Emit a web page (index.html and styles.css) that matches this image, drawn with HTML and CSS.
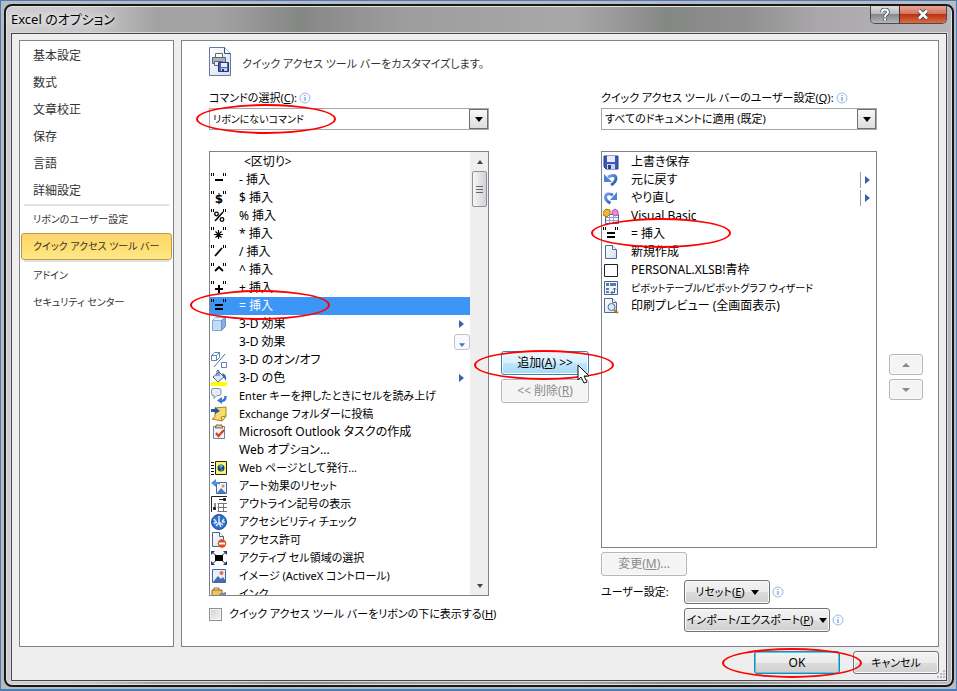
FILE: index.html
```html
<!DOCTYPE html>
<html lang="ja">

<head>
    <meta charset="UTF-8">
    <title>Excel のオプション</title>
    <link rel="stylesheet" href="styles.css">
</head>

<body>

    <svg class="defs" width="0" height="0" aria-hidden="true">
        <defs>
            <linearGradient id="paper" x1="0" y1="0" x2="1" y2="1">
                <stop offset="0" stop-color="#fff" />
                <stop offset="1" stop-color="#d3dff0" />
            </linearGradient>
            <linearGradient id="blue" x1="0" y1="0" x2="1" y2="1">
                <stop offset="0" stop-color="#79a5ea" />
                <stop offset="1" stop-color="#2451a8" />
            </linearGradient>
        </defs>
        <symbol id="quotes" viewBox="0 0 16 16">
            <path d="M.5 1v3M2.500 1v3M12.500 1v3M14.500 1v3" stroke="#000" />
        </symbol>
        <symbol id="equals" viewBox="0 0 16 16">
            <path d="M.5 1v3M2.500 1v3M12.500 1v3M14.500 1v3" stroke="#000" />
            <path d="M4 7h8M4 11h8" stroke="#000" stroke-width="2" />
        </symbol>
        <symbol id="info" viewBox="0 0 12 12">
            <circle cx="6" cy="6" r="5" fill="#f7faff" stroke="#9dbbe6" />
            <path d="M6 3v1M6 5v4" stroke="#5b86c5" />
        </symbol>
        <symbol id="more" viewBox="0 0 5 8">
            <path d="M0 0l5 4-5 4z" fill="#3d62ad" />
        </symbol>
        <symbol id="drop" viewBox="0 0 8 5">
            <path d="M0 0h8L4 5z" fill="currentColor" />
        </symbol>
    </svg>

    <div class="dialog">

        <header class="titlebar">
            <h1 class="title">Excel のオプション</h1>
            <div class="window-buttons">
                <button class="win-help" type="button" aria-label="ヘルプ">
                    <svg width="10" height="13" viewBox="0 0 10 13"><path d="M2 4q0-2.500 3-2.500t3 2.500q0 1.500-1.500 2.300T5 9M5 10.500v2" fill="none" stroke="#444b55" stroke-width="3.600" /><path d="M2 4q0-2.500 3-2.500t3 2.500q0 1.500-1.500 2.300T5 9M5 10.500v2" fill="none" stroke="#fff" stroke-width="2" /></svg>
                </button>
                <button class="win-close" type="button" aria-label="閉じる">
                    <svg width="12" height="11" viewBox="0 0 12 11"><path d="M2 1.500l8 8M10 1.500l-8 8" stroke="#4b4452" stroke-width="4.400" /><path d="M2 1.500l8 8M10 1.500l-8 8" stroke="#fff" stroke-width="2.600" /></svg>
                </button>
            </div>
        </header>

        <div class="client">

            <div class="panes">

                <nav class="sidebar">
                    <a href="#">基本設定</a>
                    <a href="#">数式</a>
                    <a href="#">文章校正</a>
                    <a href="#">保存</a>
                    <a href="#">言語</a>
                    <a href="#">詳細設定</a>
                    <hr>
                    <a href="#" class="dense">リボンのユーザー設定</a>
                    <a href="#" class="dense current">クイック アクセス ツール バー</a>
                    <hr>
                    <a href="#" class="dense">アドイン</a>
                    <a href="#" class="dense">セキュリティ センター</a>
                </nav>

                <main class="page">

                    <div class="heading">
                        <svg width="24" height="30" viewBox="0 0 24 30">
                            <path d="M.5.500h15l6 6v22H.5z" fill="url(#paper)" stroke="#63799f" />
                            <path d="M15.500.500v6h6" fill="#fff" stroke="#304e83" />
                            <path d="M6.500 6.500h7v5h-7z" fill="#fff" stroke="#667" />
                            <path d="M3.500 10.500h13v6h-13z" fill="#aab1ba" stroke="#59616e" />
                            <path d="M5.500 14.500h8v4h-8z" fill="#eef" stroke="#667" />
                            <path d="M9.500 15.500h10v9h-10z" fill="#4a5fc0" stroke="#26377d" />
                            <path d="M12 16h6v4h-6z" fill="#e4ecfa" />
                            <path d="M12 21h6v3h-6z" fill="#c5cdeb" />
                            <path d="M13 22h2v2h-2z" fill="#26377d" />
                        </svg>
                        <h2 class="kana">クイック アクセス ツール バーをカスタマイズします。</h2>
                    </div>

                    <div class="columns">

                        <section class="column">
                            <div class="label-row">
                                <label class="kana" for="commands">コマンドの選択(<u>C</u>):</label>
                                <svg width="12" height="12"><use href="#info" /></svg>
                            </div>
                            <div class="combo">
                                <select id="commands" class="dense">
                                    <option>リボンにないコマンド</option>
                                </select>
                                <span class="combo-arrow"><svg width="8" height="5"><use href="#drop" /></svg></span>
                                <span class="mark mark-combo"></span>
                            </div>
                            <div class="list-box">
                                <ul class="list" role="listbox" aria-label="コマンド">
                                    <li role="option" class="separator"><span>&lt;区切り&gt;</span></li>
                                    <li role="option">
                                        <svg class="icon" viewBox="0 0 16 16"><use href="#quotes" /><path d="M4 8h8" stroke="#000" stroke-width="2" /></svg>
                                        <span>- 挿入</span>
                                    </li>
                                    <li role="option">
                                        <svg class="icon" viewBox="0 0 16 16"><use href="#quotes" /><text x="8" y="13" class="glyph">$</text></svg>
                                        <span>$ 挿入</span>
                                    </li>
                                    <li role="option">
                                        <svg class="icon" viewBox="0 0 16 16"><use href="#quotes" /><path d="M12 4l-8 9" stroke="#000" stroke-width="1.500" /><circle cx="5.500" cy="6" r="1.800" fill="none" stroke="#000" stroke-width="1.300" /><circle cx="11" cy="11.500" r="1.800" fill="none" stroke="#000" stroke-width="1.300" /></svg>
                                        <span>% 挿入</span>
                                    </li>
                                    <li role="option">
                                        <svg class="icon" viewBox="0 0 16 16"><use href="#quotes" /><path d="M7.500 4v9M3 8.500h9M4.500 5.500l6 6M10.500 5.500l-6 6" stroke="#000" stroke-width="1.200" /></svg>
                                        <span>* 挿入</span>
                                    </li>
                                    <li role="option">
                                        <svg class="icon" viewBox="0 0 16 16"><use href="#quotes" /><path d="M11 4l-7 8" stroke="#000" stroke-width="1.800" /></svg>
                                        <span>/ 挿入</span>
                                    </li>
                                    <li role="option">
                                        <svg class="icon" viewBox="0 0 16 16"><use href="#quotes" /><path d="M4 9l4-4 4 4" fill="none" stroke="#000" stroke-width="1.800" /></svg>
                                        <span>^ 挿入</span>
                                    </li>
                                    <li role="option">
                                        <svg class="icon" viewBox="0 0 16 16"><use href="#quotes" /><path d="M4 9h8M8 5v8" stroke="#000" stroke-width="2" /></svg>
                                        <span>+ 挿入</span>
                                    </li>
                                    <li role="option" class="selected" aria-selected="true">
                                        <svg class="icon"><use href="#equals" /></svg>
                                        <span>= 挿入</span>
                                    </li>
                                    <li role="option">
                                        <svg class="icon" viewBox="0 0 16 16"><path d="M1.500 4.500h9v10h-9z" fill="#c3dcf5" stroke="#7fa8d5" /><path d="M1.500 4.500l3-3h10l-4 3z" fill="#eef6ff" stroke="#8fb4dc" /><path d="M10.500 4.500l4-3v9l-4 4z" fill="#86b0e0" stroke="#6d93bd" /></svg>
                                        <span>3-D 効果</span>
                                        <svg class="more" width="5" height="8"><use href="#more" /></svg>
                                    </li>
                                    <li role="option">
                                        <span class="icon"></span>
                                        <span>3-D 効果</span>
                                        <span class="gallery"><svg width="6" height="4" viewBox="0 0 8 5"><path d="M0 0h8L4 5z" fill="#4671c6" /></svg></span>
                                    </li>
                                    <li role="option">
                                        <svg class="icon" viewBox="0 0 16 16" fill="none" stroke="#6284b4"><path d="M.5 3.500h5v5h-5zM.5 3.500l3-3h5l-3 3M8.500.5v5l-3 3M10.500 10.500h5v5h-5z" /><path d="M14 2L3 15" stroke="#547599" /></svg>
                                        <span>3-D のオン/オフ</span>
                                    </li>
                                    <li role="option">
                                        <svg class="icon" viewBox="0 0 16 16"><path d="M0 12h16v4H0z" fill="#ff0" /><path d="M2 7l6-5 5 5-6 5z" fill="#dce8f7" stroke="#4c6791" /><path d="M6 6V1q1-2 2 0v5" fill="none" stroke="#4c6791" /><path d="M11 3q5 1 4 8l-3-5z" fill="#3467b0" /></svg>
                                        <span>3-D の色</span>
                                        <svg class="more" width="5" height="8"><use href="#more" /></svg>
                                    </li>
                                    <li role="option">
                                        <svg class="icon" viewBox="0 0 16 16"><path d="M2 .5h6q2 0 2 2v3q0 2-2 2H6l-3 3v-3H2q-1.500 0-1.500-2v-3q0-2 1.500-2z" fill="#e6ecf6" stroke="#7c8da8" /><path d="M14.500 8q0 5-4 5" fill="none" stroke="#3d78ce" stroke-width="2.500" /><path d="M11 9v7l-5-3.500z" fill="#3d78ce" /></svg>
                                        <span class="kana">Enter キーを押したときにセルを読み上げ</span>
                                    </li>
                                    <li role="option">
                                        <svg class="icon" viewBox="0 0 16 16"><path d="M4 2l11-1v9l-4 5-10-2 3-2z" fill="#f8dd6c" stroke="#aa831d" /><path d="M15 10l-5 1 1 4z" fill="#fff2a7" stroke="#aa831d" /><path d="M0 3h4V1l5 4-5 3V6H0z" fill="#28579f" /></svg>
                                        <span class="kana">Exchange フォルダーに投稿</span>
                                    </li>
                                    <li role="option">
                                        <svg class="icon" viewBox="0 0 16 16"><path d="M2.500 2.500h11v12h-11z" fill="#f2f5fc" stroke="#7081a2" /><path d="M5 3V1h6v2l1 1H4z" fill="#e1c893" stroke="#866d44" /><path d="M5 9l2.500 3L13 6" fill="none" stroke="#dc3d20" stroke-width="2.200" /></svg>
                                        <span>Microsoft Outlook タスクの作成</span>
                                    </li>
                                    <li role="option">
                                        <span class="icon"></span>
                                        <span>Web オプション...</span>
                                    </li>
                                    <li role="option">
                                        <svg class="icon" viewBox="0 0 16 16"><path d="M0 2.500h3M0 5.500h3M0 8.500h3M0 11.500h3M0 14.500h3" stroke="#000" /><path d="M4.500 1.500h11v13h-11z" fill="#fff56a" stroke="#222" /><circle cx="10" cy="8" r="3.500" fill="#153f85" /><path d="M8 6q3-3 4 0l-2 3zM9 10l3-1-1 2z" fill="#50b7ac" /></svg>
                                        <span class="kana">Web ページとして発行...</span>
                                    </li>
                                    <li role="option">
                                        <svg class="icon" viewBox="0 0 16 16"><path d="M5.500 4.500h10v11h-10z" fill="#f0f5ff" stroke="#4267a4" /><path d="M6 15l4-5 5 5z" fill="#4e79bd" /><circle cx="12" cy="8" r="1.500" fill="#e88955" /><path d="M9 7V4H5V1L0 5l5 4V6h3z" fill="#4b91dd" /></svg>
                                        <span class="kana">アート効果のリセット</span>
                                    </li>
                                    <li role="option">
                                        <svg class="icon" viewBox="0 0 16 16" fill="none" stroke="#222"><path d="M.5 16V.5H16" /><path d="M4 11V7M8 3.500h5" /><path d="M2.500 11.500h2v2h-2zM12.500 2.500h2v2h-2z" fill="#222" /><path d="M6.500 7.500H16M6.500 11.500H16M6.500 15.500H16M7.500 7v9M12.500 7v9" stroke="#777" /></svg>
                                        <span class="kana">アウトライン記号の表示</span>
                                    </li>
                                    <li role="option">
                                        <svg class="icon" viewBox="0 0 16 16"><circle cx="8" cy="8" r="7.500" fill="#2e71c7" stroke="#1d4d98" /><path d="M8 2v6l4 3M3 5l3 4M13 5l-2 3M2.500 9h3M11 8h3M5 12l3-3 2 4" fill="none" stroke="#d7e8fb" stroke-width="1.500" /></svg>
                                        <span class="kana">アクセシビリティ チェック</span>
                                    </li>
                                    <li role="option">
                                        <svg class="icon" viewBox="0 0 16 16"><path d="M1.500.5h7l4 4v10h-11z" fill="url(#paper)" stroke="#516685" /><path d="M8.500.5v4h4" fill="#fff" stroke="#516685" /><circle cx="11" cy="11.500" r="4.200" fill="#db4c24" /><path d="M8 11.500h6" stroke="#fff" stroke-width="2" /></svg>
                                        <span class="kana">アクセス許可</span>
                                    </li>
                                    <li role="option">
                                        <svg class="icon" viewBox="0 0 16 16"><path d="M1 2l14 12M15 2L1 14" stroke="#26386e" /><path d="M0 1h4L0 5zM16 1h-4l4 4zM0 15h4l-4-4zM16 15h-4l4-4z" fill="#26386e" /><path d="M4 5h8v6H4z" fill="#000" /></svg>
                                        <span class="kana">アクティブ セル領域の選択</span>
                                    </li>
                                    <li role="option">
                                        <svg class="icon" viewBox="0 0 16 16"><path d="M1.500 1.500h13v13h-13z" fill="#e6efff" stroke="#4267a4" /><path d="M2 14l5-6 3 3 2-2 2 3v2z" fill="#486ca9" /><circle cx="10.500" cy="5" r="2" fill="#e86f3f" /></svg>
                                        <span class="kana">イメージ (ActiveX コントロール)</span>
                                    </li>
                                    <li role="option">
                                        <svg class="icon" viewBox="0 0 16 16"><path d="M1 4h10v9H1z" fill="#f2c45c" stroke="#92681e" /><path d="M3 4V2h5v2" fill="none" stroke="#92681e" /><path d="M8 8l7-2v3l-6 3z" fill="#7388ae" /></svg>
                                        <span class="kana">インク</span>
                                    </li>
                                </ul>
                                <div class="scrollbar" aria-hidden="true">
                                    <svg width="6" height="4" viewBox="0 0 6 4"><path d="M0 4h6L3 0z" fill="#444" /></svg>
                                    <span class="thumb"></span>
                                    <svg width="6" height="4" viewBox="0 0 6 4"><path d="M0 0h6L3 4z" fill="#444" /></svg>
                                </div>
                                <span class="mark mark-left-row"></span>
                            </div>
                            <label class="check kana"><input type="checkbox"><span>クイック アクセス ツール バーをリボンの下に表示する(<u>H</u>)</span></label>
                        </section>

                        <div class="side-buttons">
                            <div class="add">
                                <button class="btn hot" type="button"><span>追加(<u>A</u>) &gt;&gt;</span></button>
                                <span class="mark mark-button"></span>
                                <svg class="cursor" width="13" height="20" viewBox="0 0 13 20"><path d="M1 1v15l3-3 3 6 3-1-3-6h5z" fill="#fff" stroke="#111" /></svg>
                            </div>
                            <button class="btn" type="button" disabled><span>&lt;&lt; 削除(<u>R</u>)</span></button>
                        </div>

                        <section class="column">
                            <div class="label-row">
                                <label class="kana" for="target">クイック アクセス ツール バーのユーザー設定(<u>Q</u>):</label>
                                <svg width="12" height="12"><use href="#info" /></svg>
                            </div>
                            <div class="combo">
                                <select id="target" class="kana">
                                    <option>すべてのドキュメントに適用 (既定)</option>
                                </select>
                                <span class="combo-arrow"><svg width="8" height="5"><use href="#drop" /></svg></span>
                            </div>
                            <div class="list-box">
                                <ul class="list" role="listbox" aria-label="クイック アクセス ツール バー">
                                    <li role="option">
                                        <svg class="icon" viewBox="0 0 16 16"><path d="M1 2h14v13H3l-2-2z" fill="#3c58b6" stroke="#263e8d" /><path d="M4 2h8v6H4z" fill="#e6eefb" /><path d="M4 10h8v5H4z" fill="#ccd5ef" /><path d="M5 11h3v4H5z" fill="#263e8d" /></svg>
                                        <span>上書き保存</span>
                                    </li>
                                    <li role="option">
                                        <svg class="icon" viewBox="0 0 16 16"><path d="M5 5q7-3.500 8 1 0 4-5 7" fill="none" stroke="url(#blue)" stroke-width="3" /><path d="M1 2v8h8z" fill="#4e83da" /></svg>
                                        <span>元に戻す</span>
                                        <span class="split"><svg width="5" height="8"><use href="#more" /></svg></span>
                                    </li>
                                    <li role="option">
                                        <svg class="icon" viewBox="0 0 16 16"><path d="M10 5Q3 2 2.500 7q0 4 5 6" fill="none" stroke="url(#blue)" stroke-width="3" /><path d="M14 2v8H7z" fill="#4e83da" /></svg>
                                        <span>やり直し</span>
                                        <span class="split"><svg width="5" height="8"><use href="#more" /></svg></span>
                                    </li>
                                    <li role="option">
                                        <svg class="icon" viewBox="0 0 16 16"><path d="M2.500 6.500h13v9h-13z" fill="#f4f7ff" stroke="#4965a3" /><path d="M3 9.500h12M3 12.500h12M6.500 7v8M10.500 7v8" stroke="#91a5d0" /><path d="M0 4l3-3 4 1v4L4 9 0 7z" fill="#edb736" stroke="#a77a1b" /><path d="M9 3l3-2 3 2v4l-3 1-3-2z" fill="#e887dd" stroke="#b254a8" /></svg>
                                        <span>Visual Basic</span>
                                    </li>
                                    <li role="option">
                                        <svg class="icon"><use href="#equals" /></svg>
                                        <span>= 挿入</span>
                                    </li>
                                    <li role="option">
                                        <svg class="icon" viewBox="0 0 16 16"><path d="M2.500 1.500h7l4 4v9h-11z" fill="url(#paper)" stroke="#516994" /><path d="M9.500 1.500v4h4" fill="#fff" stroke="#516994" /></svg>
                                        <span>新規作成</span>
                                    </li>
                                    <li role="option">
                                        <svg class="icon" viewBox="0 0 16 16"><path d="M1.500 2.500h13v12h-13z" fill="#fff" stroke="#222" /></svg>
                                        <span>PERSONAL.XLSB!青枠</span>
                                    </li>
                                    <li role="option">
                                        <svg class="icon" viewBox="0 0 16 16"><path d="M1.500 1.500h13v13h-13z" fill="#f4f7fc" stroke="#48658f" /><path d="M3 3h3v3H3zM7 3h6v3H7zM3 8h3v2H3zM3 11h3v2H3z" fill="#587aad" /><path d="M8 12.500h3.500V8M10 9.500L11.500 8 13 9.500M9.500 11L8 12.500 9.500 14" fill="none" stroke="#36588f" /></svg>
                                        <span class="dense">ピボットテーブル/ピボットグラフ ウィザード</span>
                                    </li>
                                    <li role="option">
                                        <svg class="icon" viewBox="0 0 16 16"><path d="M1.500.5h8l4 4v10h-12z" fill="url(#paper)" stroke="#516994" /><path d="M9.500.5v4h4" fill="#fff" stroke="#516994" /><circle cx="8.500" cy="9" r="3.500" fill="#d8e9fa" stroke="#56718f" /><path d="M11 12l4 3" stroke="#b6741d" stroke-width="2" /></svg>
                                        <span>印刷プレビュー (全画面表示)</span>
                                    </li>
                                </ul>
                                <span class="mark mark-right-row"></span>
                            </div>
                            <div class="actions">
                                <button class="btn" type="button" disabled><span>変更(<u>M</u>)...</span></button>
                                <span class="kana actions-label">ユーザー設定:</span>
                                <div class="action">
                                    <button class="btn kana" type="button"><span>リセット(<u>E</u>)</span><svg width="8" height="5"><use href="#drop" /></svg></button>
                                    <svg width="12" height="12"><use href="#info" /></svg>
                                </div>
                                <div class="action import">
                                    <button class="btn kana" type="button"><span>インポート/エクスポート(<u>P</u>)</span><svg width="8" height="5"><use href="#drop" /></svg></button>
                                    <svg width="12" height="12"><use href="#info" /></svg>
                                </div>
                            </div>
                        </section>

                        <div class="side-buttons order">
                            <button class="btn" type="button" disabled aria-label="上へ"><svg width="8" height="4" viewBox="0 0 8 4"><path d="M0 4h8L4 0z" fill="#888" /></svg></button>
                            <button class="btn" type="button" disabled aria-label="下へ"><svg width="8" height="4" viewBox="0 0 8 4"><path d="M0 0h8L4 4z" fill="#888" /></svg></button>
                        </div>

                    </div>

                </main>

            </div>

            <footer class="footer">
                <div class="ok">
                    <button class="btn default" type="button">OK</button>
                    <span class="mark mark-ok"></span>
                </div>
                <button class="btn kana" type="button">キャンセル</button>
                <svg class="grip" width="9" height="9" viewBox="0 0 9 9"><path d="M7 0h2v2H7zM7 3h2v2H7zM7 6h2v2H7zM4 3h2v2H4zM4 6h2v2H4zM1 6h2v2H1z" fill="#bbb" /></svg>
            </footer>

        </div>

    </div>

</body>

</html>
```
FILE: styles.css
```css
* {
    box-sizing: border-box;
}

body {
    margin: 0;
    height: 100vh;
    min-height: 640px;
    padding: 3px 2px 2px 3px;
    border: 1px solid #4a7ebb;
    border-bottom-width: 2px;
    background: #b9bbc0;
    color: #000;
    font-family: "Noto Sans", "Noto Sans CJK JP", sans-serif;
    font-size: 12px;
    line-height: 18px;
    font-feature-settings: "palt";
}

.defs {
    position: absolute;
}

svg {
    display: block;
    flex: none;
}

button,
select,
input {
    margin: 0;
    font: inherit;
    font-feature-settings: inherit;
    color: inherit;
}

/* strings that are mostly katakana */
.kana {
    font-size: 11px;
}

.dense {
    font-size: 10px;
}

/* window frame */

.dialog {
    display: flex;
    flex-direction: column;
    height: 100%;
    padding: 0 5px 4px;
    border: 2px solid #17181a;
    border-radius: 8px;
    box-shadow: inset 0 0 0 1px #e2e2e6;
    background: linear-gradient(90deg, #cfcfd1 0, #c6c6c8 9%, #a2a2a2 16%, #a3a3a3 22%, #858785 31%, #9d9d9d 42%, #a8a8a8 60%, #858785 70%, #8f908f 78%, #aaa7aa 86%, #b9b7bc 100%);
}

.titlebar {
    display: flex;
    justify-content: space-between;
    align-items: flex-start;
    height: 27px;
    flex: none;
}

.title {
    margin: 4px 0 0;
    font-size: 13px;
    font-weight: normal;
    text-shadow: 0 0 6px #fff, 0 0 10px #fff;
}

.window-buttons {
    display: flex;
    height: 18px;
    border: 1px solid #4a4b50;
    border-top: 0;
    border-radius: 0 0 5px 5px;
    overflow: hidden;
}

.window-buttons button {
    display: flex;
    align-items: center;
    justify-content: center;
    padding: 0;
    border: 0;
}

.win-help {
    width: 28px;
    background: linear-gradient(#dcdcde 0, #b9babd 48%, #86888c 50%, #b4b5b8 100%);
}

.window-buttons .win-close {
    width: 47px;
    border-left: 1px solid #4a2a26;
    background: linear-gradient(#e8a595 0, #d3725c 48%, #b93413 50%, #dc6b40 100%);
}

.client {
    display: flex;
    flex-direction: column;
    flex: 1;
    min-height: 0;
    padding: 6px 7px;
    border: 1px solid #46484c;
    box-shadow: 0 0 0 1px #d9d9dc;
    background: #eee;
}

.panes {
    display: flex;
    gap: 7px;
    flex: 1;
    min-height: 0;
}

/* category list */

.sidebar {
    flex: none;
    width: 155px;
    padding: 1px;
    border: 1px solid #7f8289;
    background: #fff;
}

.sidebar a {
    display: block;
    height: 27px;
    padding: 0 0 0 11px;
    border: 1px solid transparent;
    border-radius: 3px;
    color: #333;
    line-height: 25px;
    text-decoration: none;
    white-space: nowrap;
}

.sidebar .current {
    border-color: #c29a3b;
    background: linear-gradient(#fbd571 0, #ffdd6e 50%, #fee98c 100%);
}

.sidebar hr {
    height: 2px;
    margin: 0 3px;
    border: 0;
    background: #dfe1e5;
}

/* page */

.page {
    display: flex;
    flex-direction: column;
    flex: 1;
    min-width: 0;
    padding: 6px 15px 14px 27px;
    border: 1px solid #7f8289;
    background: #fff;
}

.heading {
    display: flex;
    align-items: center;
    gap: 9px;
    margin-bottom: 11px;
}

.heading h2 {
    margin: 4px 0 0;
    color: #333;
    font-weight: normal;
}

.columns {
    display: grid;
    grid-template-columns: minmax(0, 280fr) 88px minmax(0, 276fr) 34px;
    gap: 12px;
    flex: 1;
    min-height: 0;
}

.column {
    display: flex;
    flex-direction: column;
    min-height: 0;
}

.label-row {
    display: flex;
    align-items: center;
    gap: 2px;
    height: 20px;
    white-space: nowrap;
}

.combo {
    position: relative;
    flex: none;
    height: 22px;
    margin-bottom: 21px;
}

.combo select {
    display: block;
    width: 100%;
    height: 22px;
    padding: 0 20px 0 3px;
    border: 1px solid #a5a7ac;
    border-radius: 0;
    background: #fff;
    -webkit-appearance: none;
    appearance: none;
}

.combo-arrow {
    position: absolute;
    top: 1px;
    right: 1px;
    display: flex;
    align-items: center;
    justify-content: center;
    width: 19px;
    height: 20px;
    border: 1px solid #6c6f75;
    background: linear-gradient(#f8f8f8, #dcdfdc);
    pointer-events: none;
}

.list-box {
    position: relative;
    display: flex;
    flex: 1;
    min-height: 0;
    border: 1px solid #7f8289;
}

.list {
    flex: 1;
    min-width: 0;
    margin: 0;
    padding: 1px 0 0;
    overflow: hidden;
    list-style: none;
}

.list li {
    display: flex;
    align-items: center;
    gap: 12px;
    height: 18px;
    padding: 0 6px 0 1px;
    white-space: nowrap;
}

.list .separator {
    padding-left: 34px;
}

.list .selected {
    background: #3d95f5;
    color: #fff;
}

.icon {
    width: 16px;
    height: 16px;
    flex: none;
}

.glyph {
    font-family: "DejaVu Sans", sans-serif;
    font-size: 12px;
    font-weight: bold;
    text-anchor: middle;
}

.more,
.gallery,
.split {
    margin-left: auto;
}

.gallery {
    display: flex;
    align-items: center;
    justify-content: center;
    width: 16px;
    height: 16px;
    margin-right: -6px;
    padding-top: 6px;
    border: 1px solid #bcc3d2;
    border-radius: 3px;
    background: #f7f9fd;
}

.split {
    display: flex;
    align-items: center;
    height: 16px;
    padding-left: 4px;
    border-left: 1px solid #9b9da2;
}

.scrollbar {
    display: flex;
    flex-direction: column;
    align-items: center;
    width: 18px;
    padding: 8px 1px 7px 2px;
    background: #eee;
}

.scrollbar svg:last-child {
    margin-top: auto;
}

.thumb {
    width: 15px;
    height: 36px;
    margin-top: 7px;
    border: 1px solid #8f9297;
    border-radius: 2px;
    background:
        repeating-linear-gradient(#666 0 1px, transparent 1px 3px) center / 7px 7px no-repeat,
        linear-gradient(90deg, #f6f6f6, #d0d2d4);
}

.check {
    display: flex;
    align-items: center;
    gap: 7px;
    height: 36px;
    white-space: nowrap;
}

.check input {
    flex: none;
    width: 13px;
    height: 13px;
    border: 1px solid #8e8f8f;
    background: linear-gradient(135deg, #cfd2d5, #f4f4f4);
    box-shadow: inset 0 0 0 1px #f4f4f4;
    -webkit-appearance: none;
    appearance: none;
}

/* buttons */

.btn {
    display: flex;
    align-items: center;
    justify-content: center;
    gap: 6px;
    width: 100%;
    height: 24px;
    padding: 0 4px;
    border: 1px solid #707277;
    border-radius: 3px;
    background: linear-gradient(#f3f3f3 0, #ebebeb 50%, #dcdcdc 51%, #d0d0d0 100%);
    box-shadow: inset 0 0 0 1px #fafafa;
    white-space: nowrap;
}

.btn:disabled {
    border-color: #b2b7ba;
    background: #f4f4f4;
    color: #8b8b8b;
}

.hot {
    border-color: #3c7fb1;
    background: linear-gradient(#eaf6fd 0, #d9f0fc 50%, #bee6fd 51%, #a7d9f5 100%);
}

.default {
    border-color: #3a7f9e;
    box-shadow: inset 0 0 0 1px #3fd0f5;
}

.side-buttons {
    display: flex;
    flex-direction: column;
    justify-content: center;
    gap: 4px;
    padding-top: 34px;
}

.order .btn {
    height: 21px;
}

.add,
.ok {
    position: relative;
}

.actions {
    display: grid;
    grid-template-columns: 83px 1fr;
    gap: 4px 0;
    align-items: center;
    margin-top: 4px;
}

.actions > .btn {
    grid-column: 1 / 3;
    width: 86px;
}

.actions-label {
    white-space: nowrap;
}

.action {
    display: flex;
    align-items: center;
    gap: 2px;
}

.action .btn {
    width: 86px;
}

.import {
    grid-column: 2;
}

.import .btn {
    width: 146px;
}

.footer {
    position: relative;
    display: flex;
    justify-content: flex-end;
    gap: 13px;
    flex: none;
    padding-top: 4px;
}

.footer .btn {
    width: 86px;
    height: 23px;
}

.grip {
    position: absolute;
    right: -6px;
    bottom: -5px;
}

/* red rings round the steps to follow */

.mark {
    position: absolute;
    z-index: 1;
    width: 140px;
    height: 30px;
    border: 2px solid #f00;
    border-radius: 50%;
    pointer-events: none;
}

.mark-combo {
    top: -4px;
    left: -13px;
}

.mark-left-row {
    top: 138px;
    left: -20px;
}

.mark-right-row {
    top: 66px;
    left: -11px;
}

.mark-button {
    top: -1px;
    left: -27px;
}

.mark-ok {
    top: -3px;
    left: -32px;
}

.cursor {
    position: absolute;
    z-index: 2;
    top: 13px;
    right: -1px;
}
```
